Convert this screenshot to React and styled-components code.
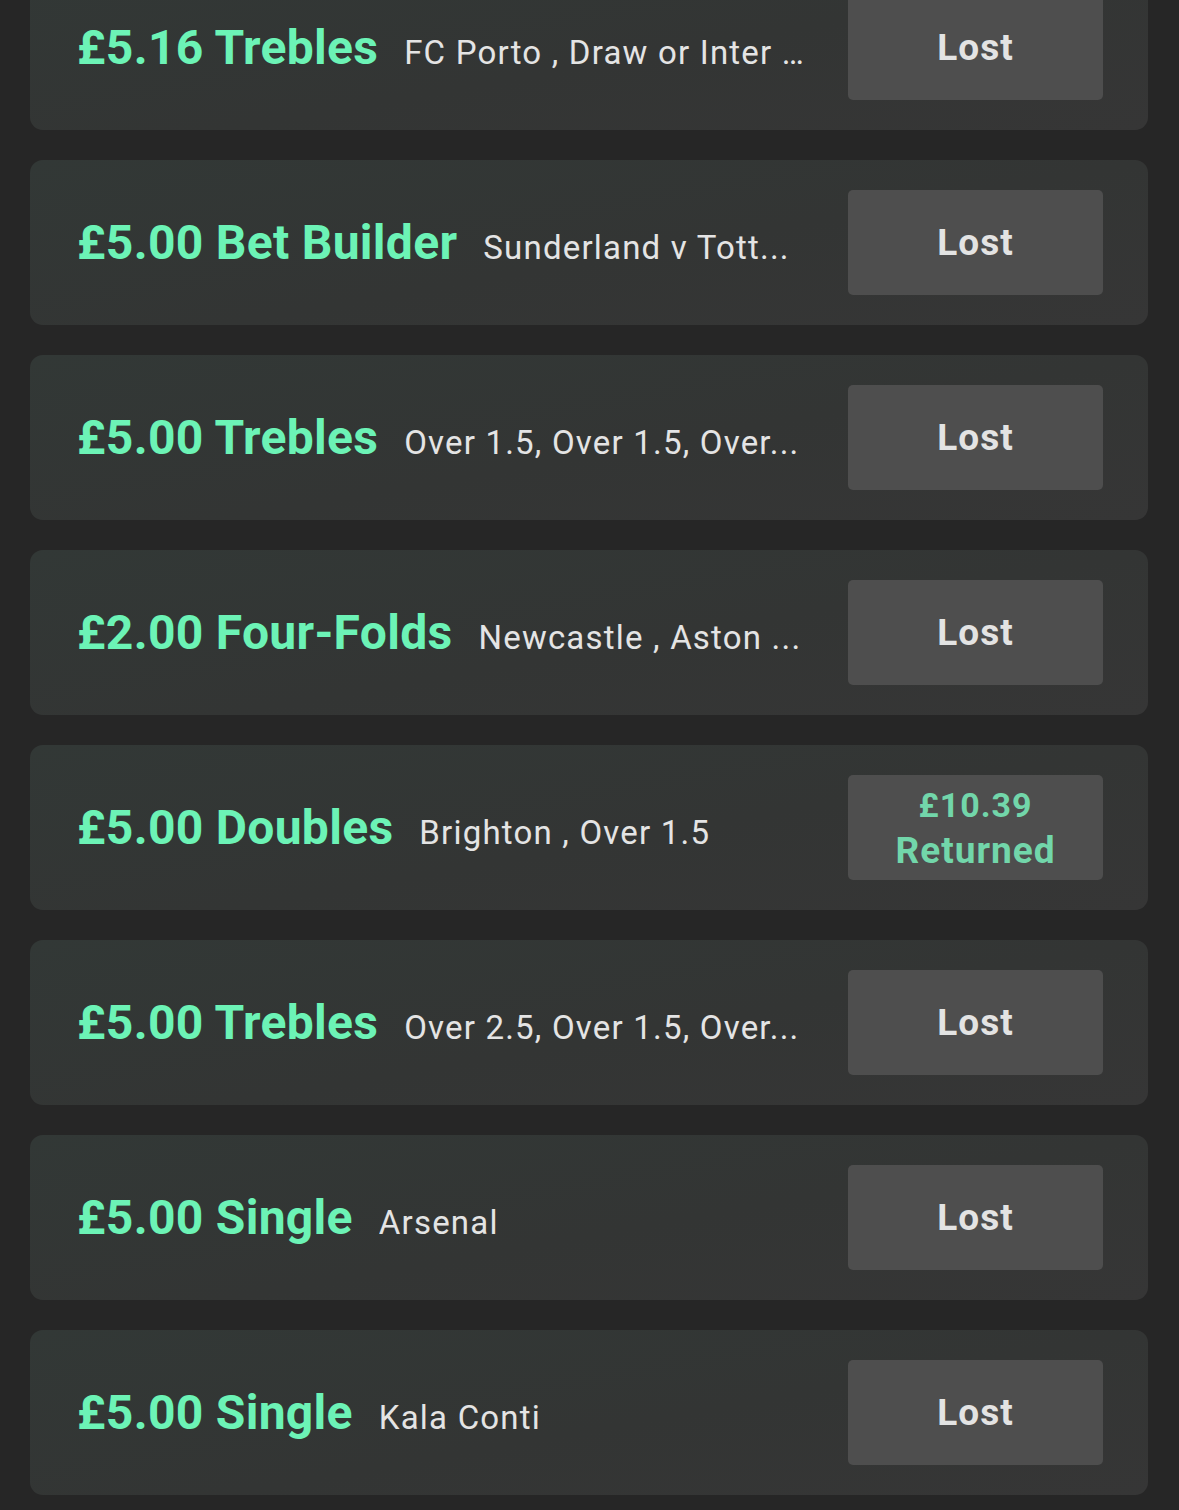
import React from "react";
import styled, { createGlobalStyle } from "styled-components";

const Global = createGlobalStyle`
  html, body { margin: 0; padding: 0; background: #262626; }
  body { font-family: Roboto, "Liberation Sans", sans-serif; -webkit-font-smoothing: antialiased; }
`;

const List = styled.div`
  display: flex;
  flex-direction: column;
  gap: 30px;
  padding: 0 31px 30px 30px;
  margin-top: -35px;
  height: 1546px;
  overflow: hidden;
`;

const Card = styled.div`
  flex: 0 0 165px;
  box-sizing: border-box;
  display: flex;
  align-items: center;
  padding: 0 45px 0 47px;
  border-radius: 13px;
  background: linear-gradient(170deg, #323836 0%, #333534 55%, #363636 100%);
`;

const Info = styled.div`
  flex: 1;
  min-width: 0;
  display: flex;
  align-items: baseline;
  gap: 26px;
  margin-right: 38px;
  white-space: nowrap;
`;

const Title = styled.span`
  flex: none;
  font-size: 48px;
  font-weight: 700;
  color: #6cf3b6;
  letter-spacing: 0.3px;
`;

const Legs = styled.span`
  flex: 1;
  min-width: 0;
  overflow: hidden;
  text-overflow: ellipsis;
  font-size: 33px;
  font-weight: 400;
  color: #e4e4e4;
  letter-spacing: 1.2px;
`;

const Status = styled.div`
  flex: 0 0 255px;
  height: 105px;
  border-radius: 5px;
  background: #4e4e4e;
  display: flex;
  flex-direction: column;
  align-items: center;
  justify-content: center;
  font-weight: 700;
  letter-spacing: 1px;
  color: ${(p) => (p.$won ? "#72d6aa" : "#e3e3e3")};
`;

const StatusLine = styled.span`
  font-size: ${(p) => p.$size}px;
  line-height: ${(p) => p.$lh}px;
`;

const bets = [
  { title: "£5.16 Trebles", legs: "FC Porto , Draw or Inter ..." },
  { title: "£5.00 Bet Builder", legs: "Sunderland v Tott..." },
  { title: "£5.00 Trebles", legs: "Over 1.5, Over 1.5, Over..." },
  { title: "£2.00 Four-Folds", legs: "Newcastle , Aston ..." },
  { title: "£5.00 Doubles", legs: "Brighton , Over 1.5", returned: "£10.39" },
  { title: "£5.00 Trebles", legs: "Over 2.5, Over 1.5, Over..." },
  { title: "£5.00 Single", legs: "Arsenal" },
  { title: "£5.00 Single", legs: "Kala Conti" },
];

export default function App() {
  return (
    <>
      <Global />
      <List>
        {bets.map((b, i) => (
          <Card key={i}>
            <Info>
              <Title>{b.title}</Title>
              <Legs>{b.legs}</Legs>
            </Info>
            {b.returned ? (
              <Status $won>
                <StatusLine $size={34} $lh={46}>{b.returned}</StatusLine>
                <StatusLine $size={37} $lh={46}>Returned</StatusLine>
              </Status>
            ) : (
              <Status>
                <StatusLine $size={37} $lh={44}>Lost</StatusLine>
              </Status>
            )}
          </Card>
        ))}
      </List>
    </>
  );
}
